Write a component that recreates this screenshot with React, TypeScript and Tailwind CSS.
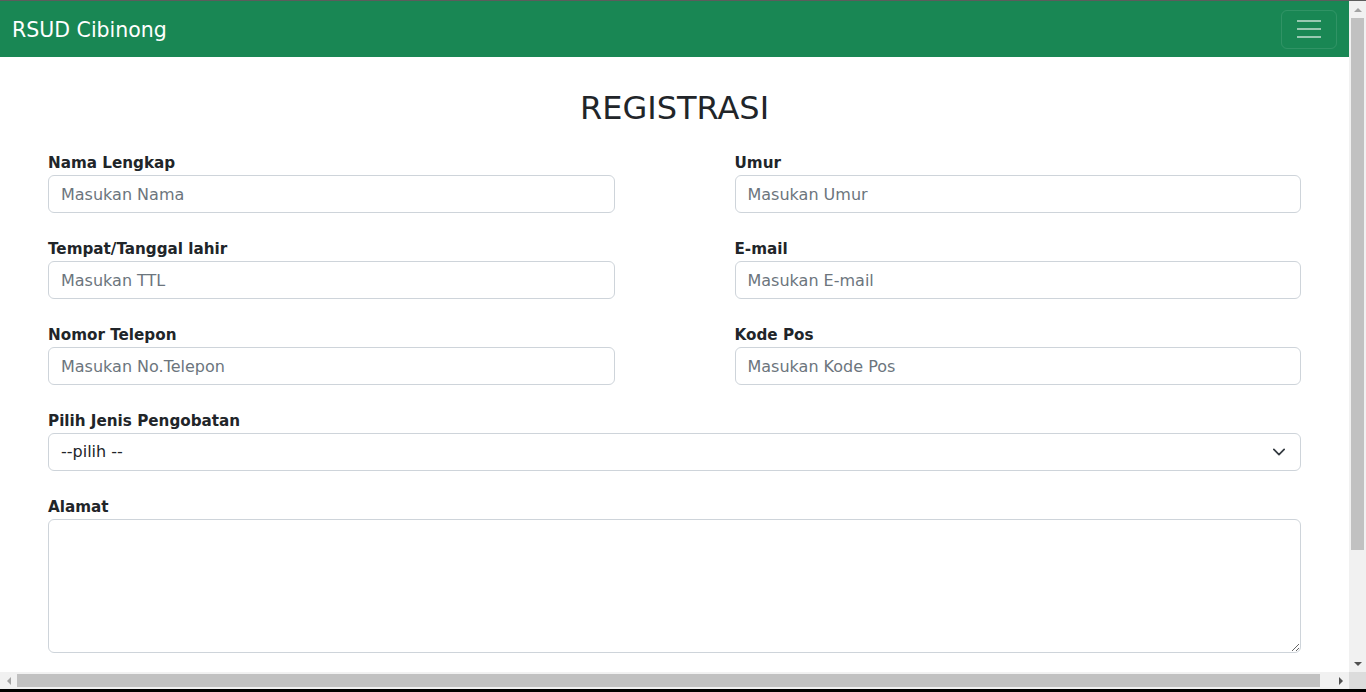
import React from "react";

const fields: [string, string][][] = [
  [["Nama Lengkap", "Masukan Nama"], ["Umur", "Masukan Umur"]],
  [["Tempat/Tanggal lahir", "Masukan TTL"], ["E-mail", "Masukan E-mail"]],
  [["Nomor Telepon", "Masukan No.Telepon"], ["Kode Pos", "Masukan Kode Pos"]],
];

const Arrow = ({ dir, dark }: { dir: "up" | "down" | "left" | "right"; dark?: boolean }) => {
  const pts = {
    up: "0,4 4,0 8,4",
    down: "0,0 8,0 4,4",
    left: "4,0 4,8 0,4",
    right: "0,0 0,8 4,4",
  }[dir];
  const horiz = dir === "left" || dir === "right";
  return (
    <svg width={horiz ? 4 : 8} height={horiz ? 8 : 4} viewBox={horiz ? "0 0 4 8" : "0 0 8 4"}>
      <polygon points={pts} fill={dark ? "#505050" : "#a3a3a3"} />
    </svg>
  );
};

const Field = ({ label, placeholder }: { label: string; placeholder: string }) => (
  <div className="mb-[23px]">
    <label className="block leading-6 pt-px font-bold text-[15.2px] text-[#212529]">{label}</label>
    <input
      placeholder={placeholder}
      className="block w-full h-[38px] px-3 rounded-md border border-[#ced4da] bg-white text-base text-[#212529] placeholder:text-[#6c757d] outline-none"
    />
  </div>
);

export default function App() {
  return (
    <div className="w-[1366px] h-[692px] overflow-hidden flex flex-col bg-white font-['DejaVu_Sans',sans-serif]">
      <div className="h-px bg-[#5c5c5c]" />
      <div className="flex flex-1 min-h-0">
        <main className="flex-1 min-w-0 overflow-hidden">
          <nav className="h-14 bg-[#198754] flex items-center justify-between pl-3 pr-3">
            <span className="text-white text-[20.5px] leading-none pt-0.5">RSUD Cibinong</span>
            <button className="w-14 h-[39px] rounded-md border border-white/10 flex flex-col items-center justify-center gap-[6px]">
              <span className="block w-6 h-0.5 bg-white/55" />
              <span className="block w-6 h-0.5 bg-white/55" />
              <span className="block w-6 h-0.5 bg-white/55" />
            </button>
          </nav>

          <h1 className="mt-8 mb-[23px] text-center text-[32px] leading-[38px] text-[#212529]">REGISTRASI</h1>

          <form className="pl-12 w-[1301px]">
            {fields.map((row, i) => (
              <div key={i} className="grid grid-cols-2 gap-x-[120px]">
                {row.map(([l, p]) => (
                  <Field key={l} label={l} placeholder={p} />
                ))}
              </div>
            ))}

            <div className="mb-[23px]">
              <label className="block leading-6 pt-px font-bold text-[15.2px] text-[#212529]">Pilih Jenis Pengobatan</label>
              <div className="flex items-center justify-between h-[38px] pl-3 pr-[15px] rounded-md border border-[#ced4da] text-base text-[#212529]">
                <span>--pilih --</span>
                <svg width="12" height="8" viewBox="1 4 14 8" fill="none">
                  <path d="M2 5l6 6 6-6" stroke="#343a40" strokeWidth="2" strokeLinecap="round" strokeLinejoin="round" />
                </svg>
              </div>
            </div>

            <div>
              <label className="block leading-6 pt-px font-bold text-[15.2px] text-[#212529]">Alamat</label>
              <textarea className="block w-full h-[134px] px-3 py-1.5 rounded-md border border-[#ced4da] text-base outline-none" />
            </div>
          </form>
        </main>

        <div className="w-[17px] bg-[#f1f1f1] flex flex-col">
          <div className="h-[17px] flex items-center justify-center">
            <Arrow dir="up" />
          </div>
          <div className="h-[532px] mx-[2px] bg-[#c1c1c1]" />
          <div className="flex-1" />
          <div className="h-[17px] flex items-center justify-center">
            <Arrow dir="down" dark />
          </div>
        </div>
      </div>

      <div className="h-[17px] flex bg-[#f1f1f1]">
        <div className="w-[17px] flex items-center justify-center">
          <Arrow dir="left" />
        </div>
        <div className="w-[1303px] my-[2px] bg-[#c1c1c1]" />
        <div className="flex-1" />
        <div className="w-[17px] flex items-center justify-center">
          <Arrow dir="right" dark />
        </div>
        <div className="w-[17px] bg-[#dcdcdc]" />
      </div>
      <div className="h-[3px] bg-black" />
    </div>
  );
}
